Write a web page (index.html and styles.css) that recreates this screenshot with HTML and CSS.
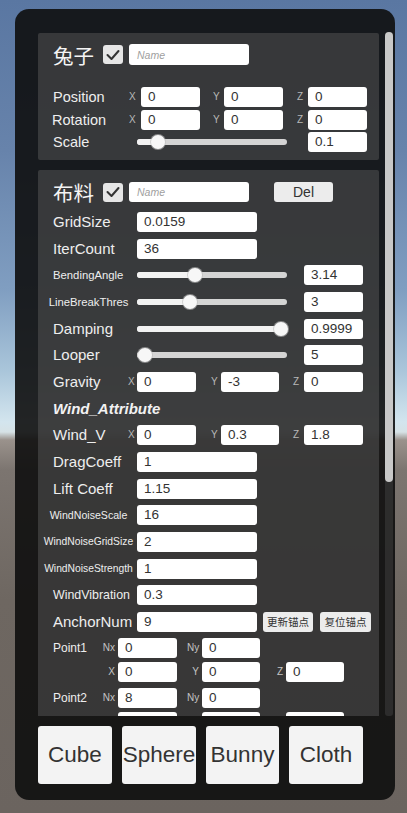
FILE: index.html
```html
<!DOCTYPE html>
<html lang="zh">
<head>
<meta charset="utf-8">
<link rel="stylesheet" href="styles.css">
</head>
<body>
<div class="panel">
  <div class="scroll-area">
    <div class="scroll-content">
      <section class="sec sec1">
        <div class="title-row t1">
          <span class="title">兔子</span>
          <span class="check"><svg width="14" height="12" viewBox="0 0 14 12"><polyline points="1.5,6 5.5,10 12.5,2" fill="none" stroke="#333" stroke-width="2" stroke-linecap="round" stroke-linejoin="round"/></svg></span>
          <span class="name">Name</span>
        </div>
        <div class="vec1 first">
          <span class="lbl14">Position</span><span class="ax">X</span><span class="inp">0</span><span></span><span class="ax">Y</span><span class="inp">0</span><span></span><span class="ax">Z</span><span class="inp">0</span>
        </div>
        <div class="vec1">
          <span class="lbl14 rot">Rotation</span><span class="ax">X</span><span class="inp">0</span><span></span><span class="ax">Y</span><span class="inp">0</span><span></span><span class="ax">Z</span><span class="inp">0</span>
        </div>
        <div class="row">
          <span class="lbl14 scale-lbl">Scale</span>
          <div class="slider"><div class="track"><div class="fill" style="width:14%"></div></div><div class="thumb" style="left:calc(14% - 7px)"></div></div>
          <span class="inp val s1val">0.1</span>
        </div>
      </section>

      <section class="sec sec2">
        <div class="title-row t2">
          <span class="title">布料</span>
          <span class="check"><svg width="14" height="12" viewBox="0 0 14 12"><polyline points="1.5,6 5.5,10 12.5,2" fill="none" stroke="#333" stroke-width="2" stroke-linecap="round" stroke-linejoin="round"/></svg></span>
          <span class="name">Name</span>
          <span class="btn del">Del</span>
        </div>
        <div class="rows">
          <div class="row"><span class="lbl">GridSize</span><span class="inp wide">0.0159</span></div>
          <div class="row"><span class="lbl">IterCount</span><span class="inp wide">36</span></div>
          <div class="row">
            <span class="lbl sm f11 la">BendingAngle</span>
            <div class="slider"><div class="track"><div class="fill" style="width:39%"></div></div><div class="thumb" style="left:calc(39% - 7px)"></div></div>
            <span class="inp val">3.14</span>
          </div>
          <div class="row">
            <span class="lbl sm f11">LineBreakThres</span>
            <div class="slider"><div class="track"><div class="fill" style="width:35%"></div></div><div class="thumb" style="left:calc(35% - 7px)"></div></div>
            <span class="inp val">3</span>
          </div>
          <div class="row">
            <span class="lbl">Damping</span>
            <div class="slider"><div class="track"><div class="fill" style="width:96%"></div></div><div class="thumb" style="left:calc(96% - 7px)"></div></div>
            <span class="inp val">0.9999</span>
          </div>
          <div class="row">
            <span class="lbl">Looper</span>
            <div class="slider"><div class="track"><div class="fill" style="width:5%"></div></div><div class="thumb" style="left:calc(5% - 7px)"></div></div>
            <span class="inp val">5</span>
          </div>
          <div class="vec2">
            <span class="lbl">Gravity</span><span class="ax">X</span><span class="inp">0</span><span></span><span class="ax">Y</span><span class="inp">-3</span><span></span><span class="ax">Z</span><span class="inp">0</span>
          </div>
          <div class="row"><span class="heading">Wind_Attribute</span></div>
          <div class="vec2">
            <span class="lbl">Wind_V</span><span class="ax">X</span><span class="inp">0</span><span></span><span class="ax">Y</span><span class="inp">0.3</span><span></span><span class="ax">Z</span><span class="inp">1.8</span>
          </div>
          <div class="row"><span class="lbl">DragCoeff</span><span class="inp wide">1</span></div>
          <div class="row"><span class="lbl">Lift Coeff</span><span class="inp wide">1.15</span></div>
          <div class="row"><span class="lbl sm f10s">WindNoiseScale</span><span class="inp wide">16</span></div>
          <div class="row"><span class="lbl sm f10">WindNoiseGridSize</span><span class="inp wide">2</span></div>
          <div class="row"><span class="lbl sm f10">WindNoiseStrength</span><span class="inp wide">1</span></div>
          <div class="row"><span class="lbl sm f12 la">WindVibration</span><span class="inp wide">0.3</span></div>
          <div class="row">
            <span class="lbl">AnchorNum</span><span class="inp wide">9</span>
            <span class="btn cn b1">更新锚点</span><span class="btn cn b2">复位锚点</span>
          </div>
          <div class="point">
            <div class="pt-row">
              <span class="plbl">Point1</span><span class="pax">Nx</span><span class="inp">0</span><span></span><span class="pax">Ny</span><span class="inp">0</span>
            </div>
            <div class="pt-row">
              <span></span><span class="pax">X</span><span class="inp">0</span><span></span><span class="pax">Y</span><span class="inp">0</span><span></span><span class="pax">Z</span><span class="inp">0</span>
            </div>
          </div>
          <div class="point">
            <div class="pt-row">
              <span class="plbl">Point2</span><span class="pax">Nx</span><span class="inp">8</span><span></span><span class="pax">Ny</span><span class="inp">0</span>
            </div>
            <div class="pt-row">
              <span></span><span class="pax"></span><span class="inp"></span><span></span><span class="pax"></span><span class="inp"></span><span></span><span class="pax"></span><span class="inp"></span>
            </div>
          </div>
        </div>
      </section>
    </div>
    <div class="scrollbar"><div class="scroll-thumb"></div></div>
  </div>
  <div class="buttons">
    <span class="big">Cube</span>
    <span class="big">Sphere</span>
    <span class="big narrow">Bunny</span>
    <span class="big">Cloth</span>
  </div>
</div>
</body>
</html>
```
FILE: styles.css
```css
html, body {
  margin: 0;
  padding: 0;
}
body {
  width: 407px;
  height: 813px;
  overflow: hidden;
  font-family: "Liberation Sans", Arial, "Noto Sans CJK SC", sans-serif;
  background: linear-gradient(to bottom,
    #5a77a2 0px,
    #6783ab 150px,
    #809ec1 290px,
    #a9c5da 370px,
    #d3e5ee 422px,
    #d6e2e6 432px,
    #9a928c 440px,
    #7c7570 470px,
    #6e6761 600px,
    #6b645f 813px);
}
.panel {
  margin: 9px 0 0 15px;
  width: 380px;
  height: 791px;
  box-sizing: border-box;
  padding: 23px 2px 16px 23px;
  border-radius: 14px;
  background: rgba(14, 14, 14, 0.9);
  display: flex;
  flex-direction: column;
}
.scroll-area {
  height: 684px;
  display: flex;
  gap: 6px;
  flex: none;
}
.scroll-content {
  width: 341px;
  height: 684px;
  overflow: hidden;
  flex: none;
}
.scrollbar {
  width: 8px;
  height: 684px;
  background: rgba(70, 70, 70, 0.45);
  border-radius: 3px;
}
.scroll-thumb {
  height: 450px;
  background: #c8c8c8;
  border-radius: 4px;
}
.sec {
  background: rgba(88, 88, 88, 0.5);
  border-radius: 2px;
  box-sizing: border-box;
  padding-left: 15px;
}
.sec1 {
  margin-top: 1px;
  height: 127px;
  padding-top: 11px;
}
.sec2 {
  margin-top: 10px;
  height: 620px;
  padding-top: 12px;
}
.title-row {
  display: flex;
  align-items: center;
}
.t1 { height: 21px; }
.t2 { height: 20px; }
.title {
  font-family: "Noto Sans CJK SC", sans-serif;
  font-size: 20.5px;
  line-height: 20px;
  color: #f4f4f4;
  width: 42px;
  white-space: nowrap;
}
.check {
  margin-left: 8px;
  width: 20px;
  height: 19px;
  background: #e6e6e6;
  border-radius: 3px;
  display: flex;
  align-items: center;
  justify-content: center;
}
.name {
  margin-left: 6px;
  width: 120px;
  height: 100%;
  box-sizing: border-box;
  padding-left: 8px;
  background: #fff;
  border-radius: 3px;
  font-style: italic;
  font-size: 10.5px;
  color: #a0a0a0;
  display: flex;
  align-items: center;
}
.btn {
  background: #ececec;
  border-radius: 3px;
  color: #333;
  display: flex;
  align-items: center;
  justify-content: center;
  height: 20px;
  flex: none;
}
.del {
  margin-left: 25px;
  width: 59px;
  font-size: 14px;
}
.cn {
  font-family: "Noto Sans CJK SC", sans-serif;
  font-size: 10.5px;
  width: 50px;
}
.b1 { margin-left: 6px; }
.b2 { margin-left: 7px; width: 51px; }

.inp {
  background: #fff;
  border-radius: 3px;
  height: 20px;
  box-sizing: border-box;
  padding-left: 7px;
  font-size: 13.5px;
  line-height: 20px;
  color: #333;
  white-space: nowrap;
  flex: none;
}
.wide { width: 120px; }
.val {
  width: 59px;
  margin-left: 17px;
}
.s1val { margin-left: 21px; }

.row {
  display: flex;
  align-items: center;
  height: 20px;
}
.lbl14 {
  font-size: 14.5px;
  color: #eeeeee;
  line-height: 20px;
  white-space: nowrap;
}
.rot { margin-left: -1px; }
.scale-lbl { width: 84px; flex: none; }

.vec1 {
  display: grid;
  grid-template-columns: 76px 12px 59px 13px 11px 59px 14px 11px 59px;
  align-items: center;
  height: 20px;
  margin-top: 2.5px;
}
.vec1.first { margin-top: 22px; }
.sec1 .row { margin-top: 2.5px; }
.ax {
  font-size: 10px;
  color: #b8b8b8;
  text-align: left;
  line-height: 20px;
}

.rows {
  margin-top: 10px;
  display: flex;
  flex-direction: column;
  gap: 6.67px;
}
.lbl {
  width: 84px;
  flex: none;
  font-size: 15px;
  line-height: 20px;
  color: #eeeeee;
  white-space: nowrap;
}
.lbl.sm {
  margin-left: -10px;
  width: 94px;
  box-sizing: border-box;
  padding-right: 3px;
  text-align: center;
}
.lbl.sm.la {
  margin-left: 0;
  width: 84px;
  text-align: left;
  padding-right: 0;
}
.f11 { font-size: 11.3px; }
.f10 { font-size: 10.3px; }
.f10s { font-size: 10.6px; }
.f12 { font-size: 12.4px; }

.slider {
  position: relative;
  width: 150px;
  height: 20px;
  flex: none;
  display: flex;
  align-items: center;
}
.track {
  width: 100%;
  height: 6px;
  border-radius: 3px;
  background: #d4d4d4;
  overflow: hidden;
}
.fill {
  height: 100%;
  background: #f2f2f2;
}
.thumb {
  position: absolute;
  top: 3px;
  width: 14px;
  height: 14px;
  border-radius: 50%;
  background: #f7f7f7;
  box-shadow: 0 0 0 1px rgba(190,190,190,0.6);
}

.vec2 {
  display: grid;
  grid-template-columns: 75px 9px 59px 15px 10px 58px 14px 11px 59px;
  align-items: center;
  height: 20px;
}
.heading {
  font-size: 15px;
  font-weight: bold;
  font-style: italic;
  color: #f2f2f2;
  line-height: 20px;
}

.point {
  display: flex;
  flex-direction: column;
  gap: 4px;
  margin-top: -0.67px;
}
.pt-row {
  display: grid;
  grid-template-columns: 49px 16px 59px 10px 15px 58px 14px 12px 58px;
  align-items: center;
  height: 20px;
}
.plbl {
  font-size: 12px;
  color: #eeeeee;
  line-height: 20px;
}
.pax {
  font-size: 10px;
  color: #c4c4c4;
  text-align: right;
  padding-right: 3px;
  line-height: 20px;
}

.buttons {
  margin-top: 10px;
  display: flex;
  gap: 10px;
  height: 58px;
  flex: none;
}
.big {
  width: 74px;
  height: 58px;
  background: #f3f3f3;
  border-radius: 3px;
  color: #333;
  font-size: 22.5px;
  display: flex;
  align-items: center;
  justify-content: center;
  white-space: nowrap;
}
.big.narrow { width: 73px; }
```
